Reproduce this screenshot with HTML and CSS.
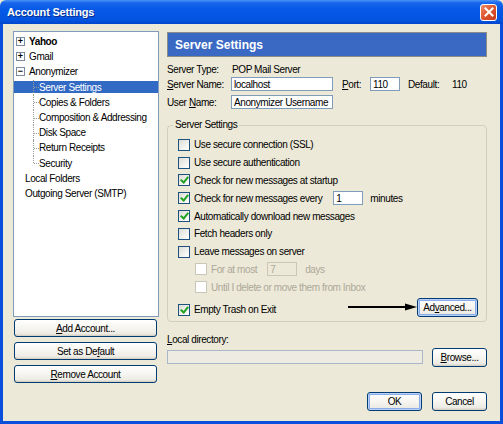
FILE: index.html
```html
<!DOCTYPE html>
<html>
<head>
	<title>Account Settings</title>

	<link rel="stylesheet" href="styles.css">
</head>
<body>
	<div class="window">
		<div class="titlebar">
			<span class="title">Account Settings</span>
			<span class="close">
				<svg width="10" height="10" viewBox="0 0 10 10"><path d="M1.5 1.5 L8.5 8.5 M8.5 1.5 L1.5 8.5" stroke="#fff" stroke-width="2" stroke-linecap="square"/></svg>
			</span>
		</div>
		<div class="client">
			<div class="sidebar">
				<ul class="tree">
					<li class="root bold"><span class="expander">+</span>Yahoo</li>
					<li class="root"><span class="expander">+</span>Gmail</li>
					<li class="root"><span class="expander">&minus;</span>Anonymizer</li>
					<li class="child selected">Server Settings</li>
					<li class="child">Copies &amp; Folders</li>
					<li class="child">Composition &amp; Addressing</li>
					<li class="child">Disk Space</li>
					<li class="child">Return Receipts</li>
					<li class="child last">Security</li>
					<li class="leaf">Local Folders</li>
					<li class="leaf">Outgoing Server (SMTP)</li>
				</ul>
				<button class="btn side-btn"><u>A</u>dd Account...</button>
				<button class="btn side-btn">Set as De<u>f</u>ault</button>
				<button class="btn side-btn"><u>R</u>emove Account</button>
			</div>

			<div class="main">
				<div class="pane-header">Server Settings</div>

				<div class="info-row">
					<span class="info-label">Server Type:</span>
					<span class="info-value">POP Mail Server</span>
				</div>
				<div class="info-row row-name">
					<span class="info-label"><u>S</u>erver Name:</span>
					<span class="field host">localhost</span>
					<span class="port-label"><u>P</u>ort:</span>
					<span class="field port">110</span>
					<span class="default-label">Default:</span>
					<span>110</span>
				</div>
				<div class="info-row">
					<span class="info-label">User <u>N</u>ame:</span>
					<span class="field host">Anonymizer Username</span>
				</div>

				<fieldset class="group">
					<legend>Server Settings</legend>
					<div class="check-row"><span class="cb"></span>Use secure connection (SSL)</div>
					<div class="check-row"><span class="cb"></span>Use secure authentication</div>
					<div class="check-row"><span class="cb checked"></span>Check for new messages at startup</div>
					<div class="check-row"><span class="cb checked"></span>Check for new messages every<span class="field minutes">1</span>minutes</div>
					<div class="check-row"><span class="cb checked"></span>Automatically download new messages</div>
					<div class="check-row"><span class="cb"></span>Fetch headers only</div>
					<div class="check-row"><span class="cb"></span>Leave messages on server</div>
					<div class="check-row sub disabled"><span class="cb"></span>For at most<span class="field days">7</span>days</div>
					<div class="check-row sub disabled"><span class="cb"></span>Until I delete or move them from Inbox</div>
					<div class="check-row last-row">
						<span class="trash"><span class="cb checked"></span>Empty Trash on Exit</span>
						<svg class="arrow" width="69" height="8" viewBox="0 0 69 8"><path d="M0 4 H60" stroke="#000" stroke-width="2"/><polygon points="57,0.5 69,4 57,7.5" fill="#000"/></svg>
						<button class="btn focus advanced">Ad<u>v</u>anced...</button>
					</div>
				</fieldset>

				<div class="dir-label"><u>L</u>ocal directory:</div>
				<div class="dir-row">
					<span class="field dir"></span>
					<button class="btn browse"><u>B</u>rowse...</button>
				</div>

				<div class="actions">
					<button class="btn focus">OK</button>
					<button class="btn">Cancel</button>
				</div>
			</div>
		</div>
	</div>
</body>
</html>
```

FILE: styles.css
```css
html, body {
	margin: 0;
	padding: 0;
}
body {
	font-family: "Liberation Sans", Arial, sans-serif;
	font-size: 10px;
	letter-spacing: -0.4px;
	color: #000;
	background: #ECE9D8;
}
.window {
	width: 503px;
	height: 424px;
	display: flex;
	flex-direction: column;
}
.titlebar {
	height: 24px;
	flex: none;
	display: flex;
	align-items: center;
	justify-content: space-between;
	padding: 0 6px 0 7px;
	border-radius: 6px 6px 0 0;
	background: linear-gradient(#4A93F7 0, #1665EC 3px, #0559E6 40%, #0453DF 85%, #0345CC 100%);
}
.title {
	color: #fff;
	font-size: 11px;
	font-weight: bold;
	letter-spacing: -0.2px;
	text-shadow: 1px 1px 0 #0B2D8C;
}
.close {
	width: 15px;
	height: 15px;
	border: 1px solid #fff;
	border-radius: 3px;
	display: flex;
	align-items: center;
	justify-content: center;
	background: linear-gradient(135deg, #F08C6C 0, #DF5A32 45%, #C8391A 100%);
}
.client {
	flex: 1;
	display: flex;
	gap: 8px;
	padding: 7px 13px 0 10px;
	border: 3px solid #0A4FDC;
	border-top: none;
	background: #ECE9D8;
}

/* left side */
.sidebar {
	width: 146px;
	display: flex;
	flex-direction: column;
}
.tree {
	list-style: none;
	margin: 0;
	padding: 2px 0 0 0;
	height: 286px;
	box-sizing: border-box;
	background: #fff;
	border: 1px solid #7F9DB9;
}
.tree li {
	position: relative;
	height: 15.2px;
	line-height: 15.2px;
	white-space: nowrap;
}
.tree .root {
	padding-left: 2px;
	display: flex;
	align-items: center;
}
.tree .bold {
	font-weight: bold;
}
.expander {
	width: 7px;
	height: 7px;
	margin-right: 4px;
	border: 1px solid #7B8A9E;
	display: flex;
	align-items: center;
	justify-content: center;
	font-size: 9px;
	line-height: 7px;
	font-weight: bold;
	letter-spacing: 0;
	background: #fff;
}
.tree .child {
	padding-left: 25px;
}
.tree .child::before {
	content: "";
	position: absolute;
	left: 19px;
	top: 0;
	bottom: 0;
	border-left: 1px dotted #9A9A9A;
}
.tree .child.last::before {
	bottom: 50%;
}
.tree .child::after {
	content: "";
	position: absolute;
	left: 20px;
	top: 50%;
	width: 5px;
	border-top: 1px dotted #9A9A9A;
}
.tree .selected {
	color: #fff;
	background: linear-gradient(transparent 1.5px, #316AC5 1.5px, #316AC5 13.5px, transparent 13.5px);
}
.tree .leaf {
	padding-left: 11px;
}

.btn {
	font-family: inherit;
	font-size: 10px;
	letter-spacing: -0.4px;
	color: #000;
	padding: 0;
	border: 1px solid #003C74;
	border-radius: 3px;
	background: linear-gradient(#FFFFFF 0, #F6F5F0 50%, #ECEBE4 85%, #D6D0C5 100%);
	box-shadow: inset 0 -1px 0 #D8D2C6;
	display: flex;
	align-items: center;
	justify-content: center;
	width: 55px;
	height: 19px;
}
.btn.focus {
	box-shadow: inset 0 0 0 1px #B9D1F6, inset 0 0 0 2px #8AADE9;
}
.side-btn {
	width: 143px;
	height: 18px;
	margin: 5px 0 0 1px;
}
.tree + .side-btn {
	margin-top: 2px;
}

/* right side */
.main {
	width: 320px;
	display: flex;
	flex-direction: column;
}
.pane-header {
	margin-top: 1px;
	height: 25px;
	box-sizing: border-box;
	border: 1px solid #8C8C86;
	background: #3A69C3;
	color: #fff;
	font-size: 12px;
	font-weight: bold;
	letter-spacing: 0;
	padding-left: 7px;
	display: flex;
	align-items: center;
}
.info-row {
	height: 14px;
	display: flex;
	align-items: center;
	margin-top: 4px;
}
.pane-header + .info-row {
	margin-top: 5px;
}
.row-name {
	margin-top: 1px;
}
.info-label {
	width: 64px;
	flex: none;
}
.info-value {
	margin-left: 1px;
}
.field {
	height: 14px;
	box-sizing: border-box;
	border: 1px solid #7F9DB9;
	background: #fff;
	padding-left: 2px;
	display: flex;
	align-items: center;
}
.host {
	width: 102px;
}
.port-label {
	margin-left: 9px;
	width: 28px;
}
.port {
	width: 30px;
}
.default-label {
	margin-left: 8px;
	width: 44px;
}

.group {
	margin: 10px 0 0 0;
	padding: 5px 0 4px 10px;
	border: 1px solid #D0D0BF;
	border-radius: 4px;
	min-width: 0;
}
.group legend {
	padding: 0 2px;
	margin-left: -5px;
	line-height: 12px;
}
.check-row {
	height: 17.8px;
	display: flex;
	align-items: center;
}
.cb {
	width: 12px;
	height: 12px;
	box-sizing: border-box;
	flex: none;
	border: 1px solid #1C5180;
	background: linear-gradient(135deg, #DCDCD7 0, #F2F2EE 60%, #FFFFFF 100%);
	margin-right: 4px;
	display: flex;
	align-items: center;
	justify-content: center;
}
.cb.checked::after {
	content: "";
	width: 3px;
	height: 6px;
	margin-top: -2px;
	border: solid #21A121;
	border-width: 0 2px 2px 0;
	transform: rotate(40deg);
}
.minutes {
	width: 30px;
	margin: 0 7px 0 11px;
}
.sub {
	padding-left: 17px;
}
.disabled {
	color: #ACA899;
}
.disabled .cb {
	border-color: #C9C7BA;
	background: #fff;
}
.days {
	width: 30px;
	margin: 0 8px 0 10px;
	border-color: #C9C7BA;
	background: #ECE9D8;
	color: #ACA899;
}
.last-row {
	height: 19px;
	margin-top: 1.7px;
	padding-right: 8px;
}
.trash {
	display: flex;
	align-items: center;
	margin-top: 5px;
}
.arrow {
	margin-left: auto;
}
.advanced {
	width: 61px;
}

.dir-label {
	margin-top: 12px;
	line-height: 12px;
}
.dir-row {
	margin-top: 2px;
	display: flex;
	align-items: center;
}
.dir {
	width: 256px;
	border-color: #A9B8C8;
	background: #EDEBE2;
}
.browse {
	margin-left: 9px;
}
.actions {
	margin-top: 25px;
	display: flex;
	justify-content: flex-end;
	gap: 10px;
}
```
